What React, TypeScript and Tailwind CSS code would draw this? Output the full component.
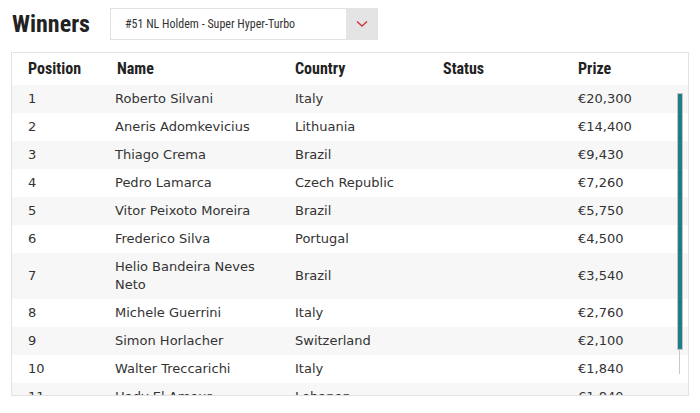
const winners = [
    { pos: 1, name: "Roberto Silvani", country: "Italy", prize: "€20,300" },
    { pos: 2, name: "Aneris Adomkevicius", country: "Lithuania", prize: "€14,400" },
    { pos: 3, name: "Thiago Crema", country: "Brazil", prize: "€9,430" },
    { pos: 4, name: "Pedro Lamarca", country: "Czech Republic", prize: "€7,260" },
    { pos: 5, name: "Vitor Peixoto Moreira", country: "Brazil", prize: "€5,750" },
    { pos: 6, name: "Frederico Silva", country: "Portugal", prize: "€4,500" },
    { pos: 7, name: "Helio Bandeira Neves Neto", country: "Brazil", prize: "€3,540" },
    { pos: 8, name: "Michele Guerrini", country: "Italy", prize: "€2,760" },
    { pos: 9, name: "Simon Horlacher", country: "Switzerland", prize: "€2,100" },
    { pos: 10, name: "Walter Treccarichi", country: "Italy", prize: "€1,840" },
    { pos: 11, name: "Hady El Amour", country: "Lebanon", prize: "€1,840" },
];

const cols = "grid grid-cols-[87px_180px_148px_135px_1fr]";
const heading = "font-['Roboto_Condensed','Liberation_Sans_Narrow',Roboto,sans-serif]";

function App() {
    return (
        <div className="w-[700px] h-[413px] bg-white pl-[11px] pr-[11px] pt-2 font-['DejaVu_Sans',Verdana,sans-serif] text-[#333]">
            <div className="flex items-center h-8">
                <h1 className={`${heading} w-[99px] pl-px text-[24px] font-bold text-[#222] leading-none`}>Winners</h1>

                <div className="flex w-[268px] h-8 border border-[#e2e2e2] bg-white">
                    <div className={`flex-1 flex items-center pl-[14px] text-[12px] text-[#333] ${heading}`}>
                        #51 NL Holdem - Super Hyper-Turbo
                    </div>
                    <div className="w-[31px] bg-[#e4e4e4] flex items-center justify-center">
                        <svg width="12" height="8" viewBox="0 0 12 8" fill="none">
                            <polyline points="1,1.5 6,6 11,1.5" stroke="#d2343c" strokeWidth="1.4" />
                        </svg>
                    </div>
                </div>
            </div>

            <div className="relative mt-3 w-[678px] h-[344px] border border-[#e2e2e2] overflow-hidden">
                <div className={`${cols} h-8 items-center pl-4 ${heading} text-[16px] font-bold text-[#222]`}>
                    <p>Position</p>
                    <p className="pl-[2px]">Name</p>
                    <p>Country</p>
                    <p>Status</p>
                    <p>Prize</p>
                </div>

                {winners.map((w, i) => (
                    <div key={w.pos} className={`${cols} items-center pl-4 py-[5px] text-[13px] leading-[18px] ${i % 2 === 0 ? "bg-[#f7f7f7]" : "bg-white"}`}>
                        <p>{w.pos}</p>
                        <p className="pr-5">{w.name}</p>
                        <p>{w.country}</p>
                        <p></p>
                        <p>{w.prize}</p>
                    </div>
                ))}

                <div className="absolute left-[667px] top-[40px] w-px h-[281px] bg-[#c8c8c8]"></div>
                <div className="absolute left-[665px] top-[40px] w-[6px] h-[257px] bg-[#1e7f8a] border border-[#c4c4c4]"></div>
            </div>
        </div>
    );
};

export default App;
